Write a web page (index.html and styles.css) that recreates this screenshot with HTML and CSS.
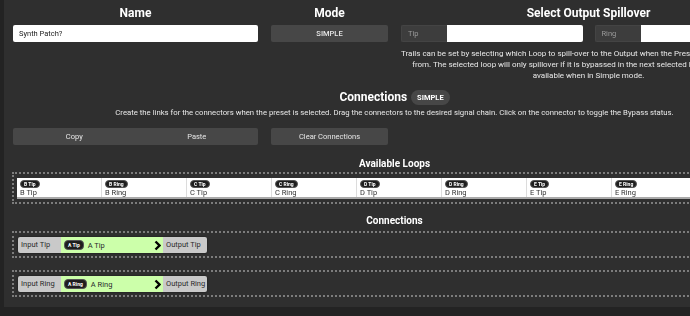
FILE: index.html
```html
<!DOCTYPE html>
<html lang="en">
<head>
    <meta charset="UTF-8">
    <meta name="viewport" content="width=device-width, initial-scale=1.0">
    <title>Preset Editor</title>
    <link rel="stylesheet" href="styles.css">
</head>
<body>
    <div class="panel">
        <div class="container">
            <div class="top-row">
                <div class="col">
                    <h2>Name</h2>
                    <input type="text" class="text-input" value="Synth Patch?">
                </div>
                <div class="col">
                    <h2>Mode</h2>
                    <button class="btn">SIMPLE</button>
                </div>
                <div class="col">
                    <h2>Select Output Spillover</h2>
                    <div class="spill-row">
                        <div class="input-group"><span class="addon">Tip</span><span class="field"></span></div>
                        <div class="input-group"><span class="addon">Ring</span><span class="field"></span></div>
                    </div>
                    <p class="help">Trails can be set by selecting which Loop to spill-over to the Output when the Preset exits and is moved away<br>from. The selected loop will only spillover if it is bypassed in the next selected Preset. Trails are only<br>available when in Simple mode.</p>
                </div>
            </div>

            <div class="section-title">
                <h2>Connections</h2>
                <span class="mode-badge">SIMPLE</span>
            </div>
            <p class="help">Create the links for the connectors when the preset is selected. Drag the connectors to the desired signal chain. Click on the connector to toggle the Bypass status.</p>

            <div class="button-row">
                <div class="btn-group">
                    <button class="btn">Copy</button>
                    <button class="btn">Paste</button>
                </div>
                <button class="btn">Clear Connections</button>
            </div>

            <h3>Available Loops</h3>
            <div class="drop-box">
                <div class="loops">
                    <div class="loop"><span class="tag">B Tip</span><span class="loop-name">B Tip</span></div>
                    <div class="loop"><span class="tag">B Ring</span><span class="loop-name">B Ring</span></div>
                    <div class="loop"><span class="tag">C Tip</span><span class="loop-name">C Tip</span></div>
                    <div class="loop"><span class="tag">C Ring</span><span class="loop-name">C Ring</span></div>
                    <div class="loop"><span class="tag">D Tip</span><span class="loop-name">D Tip</span></div>
                    <div class="loop"><span class="tag">D Ring</span><span class="loop-name">D Ring</span></div>
                    <div class="loop"><span class="tag">E Tip</span><span class="loop-name">E Tip</span></div>
                    <div class="loop"><span class="tag">E Ring</span><span class="loop-name">E Ring</span></div>
                    <div class="loop"><span class="tag">F Tip</span><span class="loop-name">F Tip</span></div>
                </div>
            </div>

            <h3 class="conn-title">Connections</h3>
            <div class="drop-box">
                <div class="chain">
                    <div class="chain-end">Input Tip</div>
                    <div class="chain-mid">
                        <span class="tag">A Tip</span><span class="chain-name">A Tip</span>
                        <svg class="arrow" width="7" height="11" viewBox="0 0 7 11"><path d="M1.5 1.5 L5.5 5.5 L1.5 9.5" fill="none" stroke="#000" stroke-width="2.4"/></svg>
                    </div>
                    <div class="chain-end">Output Tip</div>
                </div>
            </div>
            <div class="drop-box second">
                <div class="chain">
                    <div class="chain-end">Input Ring</div>
                    <div class="chain-mid">
                        <span class="tag">A Ring</span><span class="chain-name">A Ring</span>
                        <svg class="arrow" width="7" height="11" viewBox="0 0 7 11"><path d="M1.5 1.5 L5.5 5.5 L1.5 9.5" fill="none" stroke="#000" stroke-width="2.4"/></svg>
                    </div>
                    <div class="chain-end">Output Ring</div>
                </div>
            </div>
        </div>
    </div>
</body>
</html>
```

FILE: styles.css
```css
:root {
    --panel-bg: #2f2f2f;
    --page-bg: #232323;
    --btn-bg: #474747;
    --border-radius: 2px;
}
* { margin: 0; padding: 0; box-sizing: border-box; font-family: 'Roboto', sans-serif; }
html, body { overflow: hidden; }
body { background-color: var(--page-bg); color: #fff; width: 690px; height: 316px; }
.panel { margin-left: 4px; width: 800px; height: 307px; background-color: var(--panel-bg); padding: 5px 0 0 9px; }
.container { width: 763px; text-align: center; will-change: opacity; }
h2 { font-size: 12px; font-weight: 700; line-height: 16px; color: #fff; }
h3 { font-size: 10px; font-weight: 700; line-height: 14px; color: #fff; margin-top: 12px; margin-bottom: 1px; }
.top-row { display: grid; grid-template-columns: 245px 117px 375px; column-gap: 13px; text-align: center; }
.col h2 { margin-bottom: 4px; }
.text-input { display: block; width: 100%; height: 17px; border: none; border-radius: var(--border-radius); background: #fff; color: #222; font-size: 7.5px; padding: 0 6px; outline: none; }
.btn { display: block; width: 100%; height: 17px; border: none; border-radius: var(--border-radius); background-color: var(--btn-bg); color: #e6e6e6; font-size: 7.5px; cursor: pointer; }
.col .btn { font-weight: 500; }
.spill-row { display: grid; grid-template-columns: 1fr 1fr; column-gap: 12px; }
.input-group { display: flex; height: 17px; }
.addon { width: 46px; background-color: #3d3d3d; border: 1px solid #444; border-right: none; border-radius: 2px 0 0 2px; color: #9a9a9a; font-size: 7.5px; line-height: 15px; text-align: left; padding-left: 6px; }
.field { flex: 1; background: #fff; border-radius: 0 2px 2px 0; }
.help { font-size: 7.75px; line-height: 11px; color: #e8e8e8; }
.top-row .help { margin-top: 6px; white-space: nowrap; font-size: 8px; }
.section-title { display: flex; justify-content: center; align-items: center; gap: 4px; margin-top: 8px; height: 16px; margin-bottom: 2px; }
.mode-badge { display: inline-block; background-color: #474747; border-radius: 8px; font-size: 7.5px; font-weight: 700; line-height: 15px; padding: 0 6px; color: #fff; }
.button-row { display: grid; grid-template-columns: 245px 117px; column-gap: 13px; margin-top: 10px; }
.btn-group { display: flex; }
.btn-group .btn { border-radius: 0; }
.btn-group .btn:first-child { border-radius: 2px 0 0 2px; }
.btn-group .btn:last-child { border-radius: 0 2px 2px 0; }
.drop-box { border: 2px dotted #7c7c7c; margin-left: -1px; padding: 4px 3px 3px; text-align: left; }
.drop-box.second { margin-top: 12px; }
.loops { display: flex; background: #fff; border-bottom: 2px solid #a9a9a9; height: 21px; }
.loop { flex: 0 0 85px; border-right: 1px solid #dcdcdc; padding: 2px 3px 0; display: flex; flex-direction: column; align-items: flex-start; }
.tag { display: inline-block; background-color: #1e1e1e; color: #fff; font-size: 5px; font-weight: 700; line-height: 8px; padding: 0 3px; border-radius: 4px; border: 1px solid #555; }
.loop .tag { line-height: 6px; }
.loop-name { font-size: 7.5px; line-height: 10px; color: #333; }
.conn-title { margin-top: 10px; margin-bottom: 3px; }
.chain { display: flex; width: 189px; height: 16px; border-radius: 2px; box-shadow: 0 0 2px rgba(0,0,0,0.6); margin-left: 1px; overflow: hidden; }
.chain-end { flex: 0 0 43px; background-color: #c9c9c9; color: #2a2a2a; font-size: 7.5px; line-height: 16px; padding-left: 3px; }
.chain-end:last-child { flex-basis: 44px; }
.chain-mid { flex: 1; background-color: #ccffaa; display: flex; align-items: center; padding-left: 3px; }
.chain-name { font-size: 7.5px; color: #2a2a2a; margin-left: 4px; }
.arrow { margin-left: auto; margin-right: 2px; }
```
